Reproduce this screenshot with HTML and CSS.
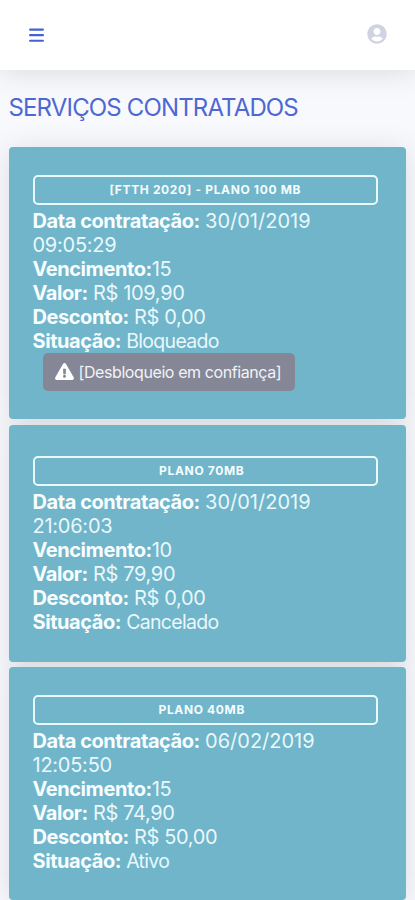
FILE: index.html
```html
<!DOCTYPE html>
<html lang="pt-BR">
<head>
<meta charset="utf-8">
<title>Serviços contratados</title>
<link rel="stylesheet" href="styles.css">
</head>
<body>
<header class="topbar">
  <svg class="menu" viewBox="0 0 14 14"><path d="M1 1.5h12M1 6.700h12M1 11.900h12" fill="none" stroke="currentColor" stroke-width="2" stroke-linecap="round"/></svg>
  <svg class="user" viewBox="0 0 496 512"><path fill="currentColor" d="M248 8C111 8 0 119 0 256s111 248 248 248 248-111 248-248S385 8 248 8zm0 96c48.600 0 88 39.400 88 88s-39.400 88-88 88-88-39.400-88-88 39.400-88 88-88zm0 344c-58.700 0-111.300-26.600-146.500-68.200 18.800-35.400 55.600-59.800 98.500-59.800 2.400 0 4.800.4 7.100 1.100 13 4.200 26.600 6.900 40.900 6.900s28-2.700 40.900-6.900c2.300-.7 4.700-1.100 7.100-1.100 42.900 0 79.700 24.400 98.500 59.800C359.300 421.400 306.700 448 248 448z"/></svg>
</header>
<main class="content">
  <h1>SERVIÇOS CONTRATADOS</h1>
  <section class="card blocked">
    <div class="plan">[FTTH 2020] - PLANO 100 MB</div>
    <p><b>Data contratação:</b> <span class="date">30/01/2019</span></p>
    <p class="time">09:05:29</p>
    <p><b>Vencimento:</b>15</p>
    <p><b>Valor:</b> <span class="price">R$ 109,90</span></p>
    <p><b>Desconto:</b> <span class="price">R$ 0,00</span></p>
    <p><b>Situação:</b> <span class="status">Bloqueado</span></p>
    <button class="unlock"><svg viewBox="0 0 576 512"><path fill="currentColor" d="M569.500 440C588 472 564.800 512 527.900 512H48.100c-36.900 0-60-40.100-41.600-72L246.400 24c18.500-32 64.700-32 83.200 0l239.900 416zM288 354c-25.400 0-46 20.600-46 46s20.600 46 46 46 46-20.600 46-46-20.600-46-46-46zm-43.700-165.300l7.400 136c.3 6.400 5.600 11.300 12 11.300h48.500c6.400 0 11.600-5 12-11.300l7.400-136c.4-6.900-5.100-12.700-12-12.700h-63.400c-6.900 0-12.400 5.800-11.900 12.700z"/></svg><span>[Desbloqueio em confiança]</span></button>
  </section>
  <section class="card cancelled">
    <div class="plan short">PLANO 70MB</div>
    <p><b>Data contratação:</b> <span class="date">30/01/2019</span></p>
    <p class="time">21:06:03</p>
    <p><b>Vencimento:</b>10</p>
    <p><b>Valor:</b> <span class="price">R$ 79,90</span></p>
    <p><b>Desconto:</b> <span class="price">R$ 0,00</span></p>
    <p><b>Situação:</b> <span class="status">Cancelado</span></p>
  </section>
  <section class="card">
    <div class="plan short">PLANO 40MB</div>
    <p><b>Data contratação:</b> <span class="date">06/02/2019</span></p>
    <p class="time">12:05:50</p>
    <p><b>Vencimento:</b>15</p>
    <p><b>Valor:</b> <span class="price">R$ 74,90</span></p>
    <p><b>Desconto:</b> <span class="price">R$ 50,00</span></p>
    <p><b>Situação:</b> <span class="status">Ativo</span></p>
  </section>
</main>
</body>
</html>
```
FILE: styles.css
```css
* { box-sizing: border-box; }
html, body { margin: 0; }
body {
  height: 900px;
  overflow: hidden;
  background: #f8f9fc;
  font-family: Inter, "Liberation Sans", sans-serif;
}
.topbar {
  height: 70px;
  padding: 0 28px 0 29px;
  display: flex;
  align-items: center;
  justify-content: space-between;
  background: #fff;
  box-shadow: 0 3px 28px rgba(58, 59, 69, .15);
}
.menu { width: 15px; height: 15px; color: #4562cf; }
.user { width: 20px; height: 20px; margin-top: -2px; color: #d1d3e2; }
.content {
  isolation: isolate;
  padding: 0 9px 0 8.500px;
}
h1 {
  margin: 22px 0 24px;
  font-size: 24px;
  line-height: 31px;
  font-weight: 400;
  letter-spacing: -.850px;
  color: #4d68d3;
}
.card {
  position: relative;
  height: 232.500px;
  margin-bottom: 5.500px;
  padding: 28px 28px 0 24px;
  border-radius: 4px;
  background: #70b5c9;
  color: #f5fdff;
}
.card::before {
  content: "";
  position: absolute;
  inset: 0;
  z-index: -1;
  border-radius: 4px;
  box-shadow: 0 3px 28px rgba(58, 59, 69, .15);
}
.card.blocked { height: 272px; }
.card.cancelled { height: 237px; padding-top: 31px; }
.plan {
  height: 30px;
  margin-bottom: 4px;
  border: 2px solid #e9faff;
  border-radius: 5px;
  font-size: 12px;
  line-height: 26px;
  font-weight: 700;
  letter-spacing: .65px;
  text-align: center;
}
.plan.short { padding-right: 7px; }
p {
  margin: 0;
  font-size: 20px;
  line-height: 24.100px;
  font-weight: 400;
  letter-spacing: -.45px;
  color: #e9f8fc;
  white-space: nowrap;
}
b { font-weight: 700; letter-spacing: -.43px; color: #f8feff; }
.date { letter-spacing: 0; }
.time { letter-spacing: -.25px; }
.price { letter-spacing: -.35px; }
.status { font-size: 19.500px; letter-spacing: -.7px; }
.unlock {
  display: flex;
  align-items: center;
  gap: 5px;
  width: 252px;
  height: 38px;
  margin: -1px 0 0 10px;
  padding: 0 0 0 12px;
  border: 0;
  border-radius: 5px;
  background: #858796;
  color: #f1f3f7;
  font: 400 16px Inter, "Liberation Sans", sans-serif;
  letter-spacing: -.41px;
  white-space: nowrap;
}
.unlock svg { width: 19px; height: 17px; flex: none; color: #fff; }
```
